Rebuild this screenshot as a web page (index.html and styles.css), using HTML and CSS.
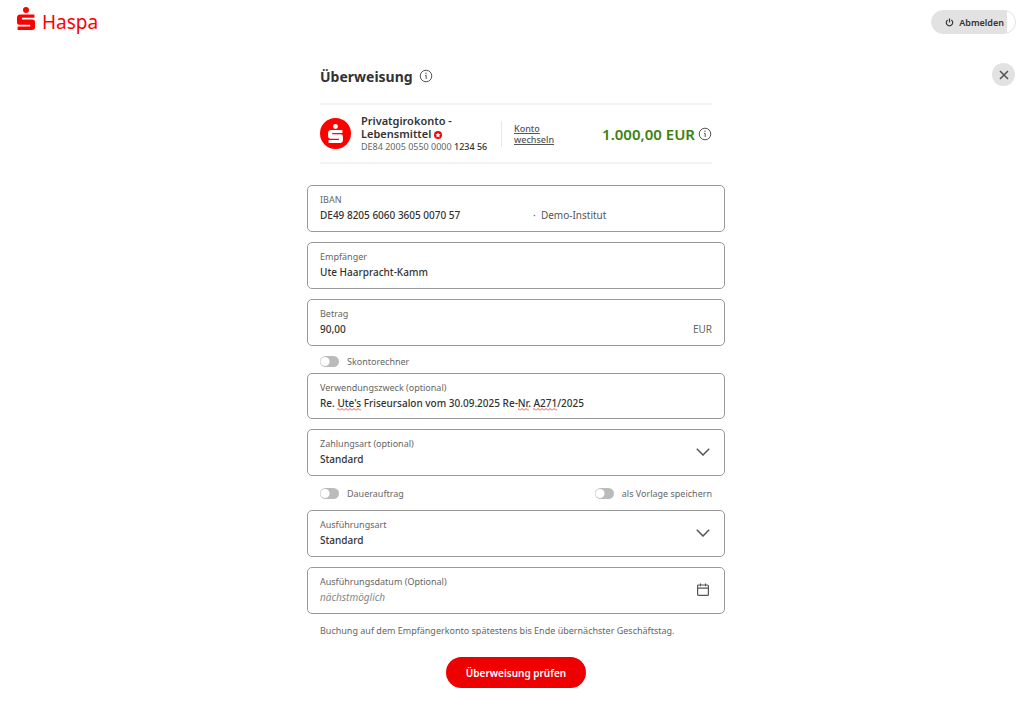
FILE: index.html
```html
<!DOCTYPE html>
<html lang="de">
<head>
  <meta charset="UTF-8">
  <meta name="viewport" content="width=device-width, initial-scale=1.0">
  <title>Haspa - Überweisung</title>
  <link rel="stylesheet" href="styles.css">
</head>
<body>

  <svg class="symbols" aria-hidden="true">
    <symbol id="logo-s" viewBox="0 0 18 23">
      <circle cx="9" cy="3" r="3"/>
      <path d="M3.4 7.4H17.4V10.8H5V12.4H15.4Q18 12.4 18 15V20Q18 23 15 23H.6V19.4H13.2V17.8H2.6Q0 17.8 0 15.2V10.8Q0 7.4 3.4 7.4Z"/>
    </symbol>
    <symbol id="info" viewBox="0 0 14 14">
      <circle cx="7" cy="7" r="5.8" fill="none" stroke="currentColor"/>
      <path d="M6 6.4H7.2V10" fill="none" stroke="currentColor"/>
      <circle cx="7" cy="4.3" r=".7" fill="currentColor"/>
    </symbol>
    <symbol id="chevron" viewBox="0 0 14 8">
      <path d="M.8 .8L7 7L13.2 .8" fill="none" stroke="currentColor" stroke-width="1.5"/>
    </symbol>
  </svg>

  <header class="topbar">
    <a class="brand" href="#">
      <svg class="brand-logo" aria-hidden="true"><use href="#logo-s"/></svg>
      <span>Haspa</span>
    </a>
    <button class="logout" type="button">
      <svg viewBox="0 0 10 10" aria-hidden="true">
        <path d="M3 2.1A3.6 3.6 0 1 0 7 2.1M5 .6V5" fill="none" stroke="currentColor" stroke-width="1.3"/>
      </svg>
      Abmelden
    </button>
  </header>

  <button class="close" type="button" aria-label="Schließen">
    <svg viewBox="0 0 10 10" aria-hidden="true">
      <path d="M1 1L9 9M9 1L1 9" fill="none" stroke="currentColor" stroke-width="1.6"/>
    </svg>
  </button>

  <main>
    <form class="transfer">
      <div class="title">
        <h1>Überweisung</h1>
        <svg class="info" aria-hidden="true"><use href="#info"/></svg>
      </div>

      <section class="account">
        <div class="account-logo"><svg aria-hidden="true"><use href="#logo-s"/></svg></div>
        <div class="account-name">
          <h2>Privatgirokonto -<br>Lebensmittel
            <svg viewBox="0 0 8 8" aria-hidden="true">
              <circle cx="4" cy="4" r="4" fill="#f00"/>
              <path d="M4 1.5L4.8 3.1L6.6 3.3L5.3 4.6L5.6 6.4L4 5.6L2.4 6.4L2.7 4.6L1.4 3.3L3.2 3.1Z" fill="#fff"/>
            </svg>
          </h2>
          <p>DE84 2005 0550 0000 <b>1234 56</b></p>
        </div>
        <div class="switch-account"><a href="#">Konto wechseln</a></div>
        <div class="balance">
          1.000,00 EUR
          <svg class="info" aria-hidden="true"><use href="#info"/></svg>
        </div>
      </section>

      <div class="field">
        <label for="iban">IBAN</label>
        <div class="line">
          <input id="iban" type="text" value="DE49 8205 6060 3605 0070 57">
          <span class="bank">·&nbsp; Demo-Institut</span>
        </div>
      </div>

      <div class="field">
        <label for="recipient">Empfänger</label>
        <input id="recipient" type="text" value="Ute Haarpracht-Kamm">
      </div>

      <div class="field">
        <label for="amount">Betrag</label>
        <div class="line">
          <input id="amount" type="text" value="90,00">
          <span class="unit">EUR</span>
        </div>
      </div>

      <div class="options discount">
        <label class="toggle"><input type="checkbox">Skontorechner</label>
      </div>

      <div class="field purpose">
        <label for="purpose">Verwendungszweck (optional)</label>
        <input id="purpose" type="text" spellcheck="false" value="Re. Ute's Friseursalon vom 30.09.2025 Re-Nr. A271/2025">
        <svg class="spelling" aria-hidden="true">
          <defs>
            <pattern id="wave" width="4" height="3" patternUnits="userSpaceOnUse">
              <path d="M0 2.5L2 .5L4 2.5" fill="none" stroke="#f44"/>
            </pattern>
          </defs>
          <rect x="17" width="24" height="3" fill="url(#wave)"/>
          <rect x="198" width="11" height="3" fill="url(#wave)"/>
          <rect x="213" width="24" height="3" fill="url(#wave)"/>
        </svg>
      </div>

      <div class="field">
        <label for="payment">Zahlungsart (optional)</label>
        <select id="payment"><option>Standard</option></select>
        <svg class="chevron" aria-hidden="true"><use href="#chevron"/></svg>
      </div>

      <div class="options">
        <label class="toggle"><input type="checkbox">Dauerauftrag</label>
        <label class="toggle"><input type="checkbox">als Vorlage speichern</label>
      </div>

      <div class="field">
        <label for="execution">Ausführungsart</label>
        <select id="execution"><option>Standard</option></select>
        <svg class="chevron" aria-hidden="true"><use href="#chevron"/></svg>
      </div>

      <div class="field">
        <label for="date">Ausführungsdatum (Optional)</label>
        <input id="date" type="text" placeholder="nächstmöglich">
        <svg class="calendar" viewBox="0 0 12 13" aria-hidden="true">
          <path d="M1.6 2H10.4Q11.4 2 11.4 3V11.4Q11.4 12.4 10.4 12.4H1.6Q.6 12.4 .6 11.4V3Q.6 2 1.6 2ZM.6 5.2H11.4M3.5 .5V3.2M8.5 .5V3.2" fill="none" stroke="currentColor" stroke-width="1.2"/>
        </svg>
      </div>

      <p class="note">Buchung auf dem Empfängerkonto spätestens bis Ende übernächster Geschäftstag.</p>

      <button class="submit" type="submit">Überweisung prüfen</button>
    </form>
  </main>

</body>
</html>
```

FILE: styles.css
```css
* {
  box-sizing: border-box;
}
body {
  margin: 0;
  position: relative;
  background: #fff;
  color: #333;
  font-family: "Noto Sans", "Open Sans", sans-serif;
  font-size: 10px;
}
button, input, select {
  font-family: inherit;
  color: inherit;
}
h1, h2, p {
  margin: 0;
}
svg {
  flex: none;
}
.symbols {
  position: absolute;
  width: 0;
  height: 0;
}

.topbar {
  display: flex;
  justify-content: space-between;
  align-items: center;
  height: 44px;
  padding: 0 8px 0 17px;
}
.brand {
  display: flex;
  align-items: center;
  gap: 7px;
  color: #f00;
  font-size: 19px;
  line-height: 24px;
  text-decoration: none;
}
.brand-logo {
  width: 18px;
  height: 23px;
  margin-bottom: 7px;
  fill: #f00;
}
.logout {
  display: flex;
  align-items: center;
  gap: 5px;
  height: 24px;
  padding: 0 11px 0 13px;
  border: 1px solid #e2e2e2;
  border-radius: 12px;
  background: linear-gradient(to left, #fff 8px, #e2e2e2 8px);
  font-size: 9px;
  font-weight: 600;
  cursor: pointer;
}
.logout svg {
  width: 9px;
  height: 9px;
}
.close {
  position: absolute;
  top: 63px;
  right: 9px;
  display: flex;
  align-items: center;
  justify-content: center;
  width: 23px;
  height: 23px;
  padding: 0;
  border: none;
  border-radius: 50%;
  background: #e2e2e2;
  color: #555;
  cursor: pointer;
}
.close svg {
  width: 10px;
  height: 10px;
}

main {
  padding: 20px 0 24px 8px;
}
.transfer {
  width: 100%;
  max-width: 418px;
  margin: 0 auto;
}
.title {
  display: flex;
  align-items: center;
  gap: 6px;
  height: 24px;
  padding: 0 13px;
}
h1 {
  font-size: 14px;
  font-weight: 700;
}
.info {
  width: 14px;
  height: 14px;
  color: #555;
}

.account {
  display: flex;
  align-items: center;
  height: 61px;
  margin: 15px 13px 21px;
  border-top: 2px solid #f3f3f3;
  border-bottom: 2px solid #f3f3f3;
}
.account-logo {
  display: flex;
  align-items: center;
  justify-content: center;
  width: 31px;
  height: 31px;
  border-radius: 50%;
  background: #f00;
}
.account-logo svg {
  width: 15px;
  height: 19px;
  fill: #fff;
}
.account-name {
  width: 150px;
  padding-left: 10px;
  white-space: nowrap;
}
.account-name h2 {
  font-size: 11px;
  font-weight: 600;
  line-height: 13px;
}
.account-name h2 svg {
  width: 8px;
  height: 8px;
  vertical-align: -1px;
}
.account-name p {
  color: #666;
  font-size: 9px;
  line-height: 13px;
}
.account-name b {
  color: #333;
  font-weight: 500;
}
.switch-account {
  width: 72px;
  padding: 2px 0 2px 12px;
  border-left: 1px solid #e8e8e8;
  font-size: 9px;
  line-height: 11px;
}
.switch-account a {
  color: #555;
  font-weight: 500;
}
.balance {
  display: flex;
  align-items: center;
  gap: 3px;
  margin-left: auto;
  color: #3b830d;
  font-size: 15px;
  font-weight: 600;
  white-space: nowrap;
}

.field {
  position: relative;
  height: 47px;
  margin-bottom: 10px;
  padding: 7px 12px;
  border: 1px solid #999;
  border-radius: 5px;
}
.field label {
  display: block;
  margin-bottom: 1px;
  color: #666;
  font-size: 9px;
  line-height: 13px;
}
.field input,
.field select {
  display: block;
  width: 100%;
  height: 16px;
  padding: 0;
  border: none;
  outline: none;
  background: none;
  appearance: none;
  font-size: 10px;
  font-weight: 500;
  line-height: 16px;
}
.field input::placeholder {
  color: #888;
  font-style: italic;
  font-weight: 400;
  opacity: 1;
}
.line {
  display: flex;
  align-items: center;
}
.field .line input {
  flex: 1;
  min-width: 0;
}
.bank {
  width: 179px;
  color: #555;
}
.unit {
  color: #666;
}
.purpose {
  height: 46px;
}
.spelling {
  position: absolute;
  top: 34px;
  left: 12px;
  width: 240px;
  height: 3px;
}
.chevron,
.calendar {
  position: absolute;
  right: 14px;
  color: #555;
  pointer-events: none;
}
.chevron {
  top: 18px;
  width: 14px;
  height: 8px;
}
.calendar {
  top: 15px;
  right: 15px;
  width: 12px;
  height: 13px;
}

.options {
  display: flex;
  justify-content: space-between;
  align-items: center;
  height: 14px;
  margin: 0 13px 10px;
}
.discount {
  height: 12px;
  margin-top: -1px;
  margin-bottom: 6px;
}
.toggle {
  display: flex;
  align-items: center;
  gap: 8px;
  color: #666;
  font-size: 9px;
}
.toggle input {
  width: 19px;
  height: 11px;
  margin: 0;
  border-radius: 6px;
  background: radial-gradient(circle at 5px center, #fff 4px, #bbb 5px);
  appearance: none;
  cursor: pointer;
}
.note {
  padding: 0 13px;
  color: #666;
  font-size: 9px;
  line-height: 13px;
}
.submit {
  display: block;
  width: 140px;
  height: 31px;
  margin: 20px auto 0;
  padding: 0;
  border: none;
  border-radius: 16px;
  background: #e00;
  color: #fff;
  font-size: 10px;
  font-weight: 600;
  cursor: pointer;
}
```
